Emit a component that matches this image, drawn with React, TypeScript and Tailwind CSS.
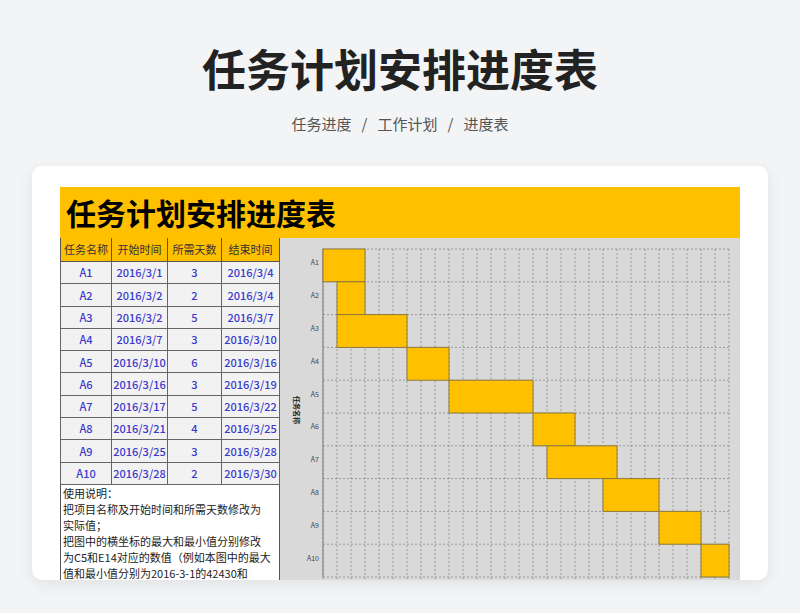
const tasks = [
  ["A1", "2016/3/1", 3, "2016/3/4", 0],
  ["A2", "2016/3/2", 2, "2016/3/4", 1],
  ["A3", "2016/3/2", 5, "2016/3/7", 1],
  ["A4", "2016/3/7", 3, "2016/3/10", 6],
  ["A5", "2016/3/10", 6, "2016/3/16", 9],
  ["A6", "2016/3/16", 3, "2016/3/19", 15],
  ["A7", "2016/3/17", 5, "2016/3/22", 16],
  ["A8", "2016/3/21", 4, "2016/3/25", 20],
  ["A9", "2016/3/25", 3, "2016/3/28", 24],
  ["A10", "2016/3/28", 2, "2016/3/30", 27],
] as const;

const font = { fontFamily: '"Noto Sans CJK SC", "Noto Sans", sans-serif' };

function Gantt() {
  const day = 14;
  const rowH = 32.8;
  const w = 29 * day;
  const h = rowH * 10;
  return (
    <svg width={460} height={342} className="block">
      <rect width={460} height={342} fill="#d9d9d9" />
      <g transform="translate(43,11)">
        {Array.from({ length: 30 }).map((_, i) => (
          <line key={"v" + i} x1={i * day} y1={0} x2={i * day} y2={h + 6} stroke="#8a8a8a" strokeWidth={0.8} strokeDasharray="2 2" />
        ))}
        {Array.from({ length: 11 }).map((_, i) => (
          <line key={"h" + i} x1={0} y1={i * rowH} x2={w} y2={i * rowH} stroke="#8a8a8a" strokeWidth={0.8} strokeDasharray="2 2" />
        ))}
        <line x1={0} y1={0} x2={0} y2={h} stroke="#7a7a7a" />
        {tasks.map((t, i) => (
          <g key={t[0]}>
            <rect x={t[4] * day} y={i * rowH} width={t[2] * day} height={rowH} fill="#ffc000" stroke="#8c7a3a" strokeWidth={1} />
            <text x={-4} y={i * rowH + rowH / 2} textAnchor="end" fontSize={7} fill="#444" style={font}>{t[0]}</text>
          </g>
        ))}
      </g>
      <text transform="translate(14,172) rotate(90)" fontSize={7} fontWeight="bold" fill="#222" textAnchor="middle" style={font}>任务名称</text>
    </svg>
  );
}

export default function App() {
  return (
    <div className="w-[800px] h-[613px] bg-[#f3f4f6] overflow-hidden" style={font}>
      <h1 className="pt-[38px] text-center text-[44px] font-bold leading-[60px] text-[#222]">任务计划安排进度表</h1>
      <div className="mt-[14px] flex justify-center gap-[10px] text-[15px] text-[#555] leading-[24px]">
        <span>任务进度</span><span>/</span><span>工作计划</span><span>/</span><span>进度表</span>
      </div>
      <div className="mx-[32px] mt-[30px] h-[414px] overflow-hidden rounded-[10px] bg-white shadow-[0_4px_16px_rgba(0,0,0,0.08)] pl-[28px] pt-[21px]">
        <div className="w-[680px]">
          <div className="h-[51px] bg-[#ffc000] pl-[6px] text-[30px] font-bold leading-[51px] text-black">任务计划安排进度表</div>
          <div className="flex">
            <div className="w-[220px] text-[11px]">
              <div className="grid grid-cols-[52px_56px_54px_58px] h-[24px] bg-[#ffc000] text-[#333]">
                {["任务名称", "开始时间", "所需天数", "结束时间"].map((s) => (
                  <div key={s} className="flex items-center justify-center border-r border-b border-[#555] first:border-l">{s}</div>
                ))}
              </div>
              {tasks.map((t) => (
                <div key={t[0]} className="grid grid-cols-[52px_56px_54px_58px] h-[22.3px] bg-[#f2f2f2] font-medium text-[#3a3acc]">
                  {[t[0], t[1], t[2], t[3]].map((s, i) => (
                    <div key={i} className="flex items-center justify-center border-r border-b border-[#666] first:border-l">{s}</div>
                  ))}
                </div>
              ))}
              <div className="border-l border-r border-[#555] pl-[2px] pr-[8px] text-[11px] leading-[16px] text-[#222]">
                使用说明：<br />把项目名称及开始时间和所需天数修改为实际值；<br />把图中的横坐标的最大和最小值分别修改为C5和E14对应的数值（例如本图中的最大值和最小值分别为2016-3-1的42430和2016-3-30的42459）
              </div>
            </div>
            <Gantt />
          </div>
        </div>
      </div>
    </div>
  );
}
